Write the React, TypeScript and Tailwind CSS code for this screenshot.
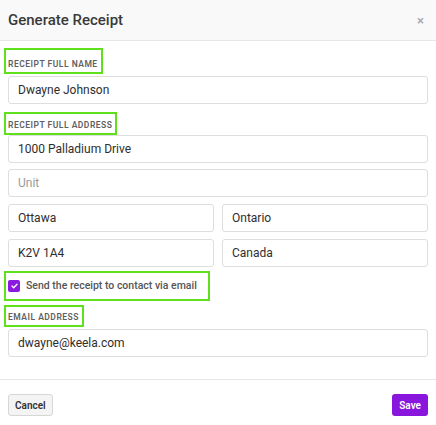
import React from "react";

const font = { fontFamily: "Roboto, 'Liberation Sans', sans-serif" };

function FieldLabel({ children, className = "" }: { children: React.ReactNode; className?: string }) {
  return (
    <div className={`flex items-end self-start border-2 border-[#5fe01c] pb-[4px] pl-[2px] pr-[3px] ${className}`}>
      <span className="text-[8.5px] font-semibold uppercase leading-none tracking-[0.5px] text-[#5f5f5f]">{children}</span>
    </div>
  );
}

function Field({ value, placeholder, className = "" }: { value?: string; placeholder?: string; className?: string }) {
  return (
    <div
      className={`flex h-[28px] items-center rounded-[3px] border border-[#dedede] bg-white px-[9px] text-[12px] ${
        value ? "text-[#2e2e2e]" : "text-[#9a9a9a]"
      } ${className}`}
    >
      {value ?? placeholder}
    </div>
  );
}

export default function App() {
  return (
    <div className="h-[425px] w-[436px] bg-white" style={font}>
      <header className="flex h-[41px] items-center justify-between border-b border-[#e6e6e6] bg-[#f9f9f9] pl-[8px] pr-[12px]">
        <h2 className="text-[15px] font-medium text-[#3a3a3a]">Generate Receipt</h2>
        <span className="text-[13px] font-bold leading-none text-[#a9adb3]">×</span>
      </header>

      <div className="flex flex-col px-[8px]">
        <FieldLabel className="-ml-[4px] mt-[7px] h-[26px]">Receipt Full Name</FieldLabel>
        <Field value="Dwayne Johnson" className="mt-[2px]" />

        <FieldLabel className="-ml-[4px] mt-[8px] h-[23px]">Receipt Full Address</FieldLabel>
        <Field value="1000 Palladium Drive" />
        <Field placeholder="Unit" className="mt-[6px]" />
        <div className="mt-[7px] grid grid-cols-2 gap-[8px]">
          <Field value="Ottawa" />
          <Field value="Ontario" />
        </div>
        <div className="mt-[7px] grid grid-cols-2 gap-[8px]">
          <Field value="K2V 1A4" />
          <Field value="Canada" />
        </div>

        <label className="-ml-[4px] mt-[4px] flex h-[30px] w-[206px] items-center gap-[6px] border-2 border-[#5fe01c] pl-[2px]">
          <span className="flex h-[12px] w-[12px] items-center justify-center rounded-[2px] bg-[#8a1ae0]">
            <svg width="7" height="6" viewBox="0 0 7 6" fill="none">
              <path d="M1 3l1.7 1.7L6 1.2" stroke="white" strokeWidth="1.3" strokeLinecap="round" strokeLinejoin="round" />
            </svg>
          </span>
          <span className="text-[10.5px] font-medium text-[#555]">Send the receipt to contact via email</span>
        </label>

        <FieldLabel className="-ml-[4px] mt-[4px] h-[22px]">Email Address</FieldLabel>
        <Field value="dwayne@keela.com" className="mt-[2px]" />
      </div>

      <footer className="mt-[22px] flex items-center justify-between border-t border-[#e6e6e6] px-[8px] pt-[14px]">
        <button className="h-[22px] rounded-[3px] border border-[#d6d6d6] bg-[#f4f4f4] px-[6px] text-[10px] font-semibold text-[#333]">
          Cancel
        </button>
        <button className="h-[22px] rounded-[3px] bg-[#8916dc] px-[7px] text-[10px] font-semibold text-white">Save</button>
      </footer>
    </div>
  );
}
